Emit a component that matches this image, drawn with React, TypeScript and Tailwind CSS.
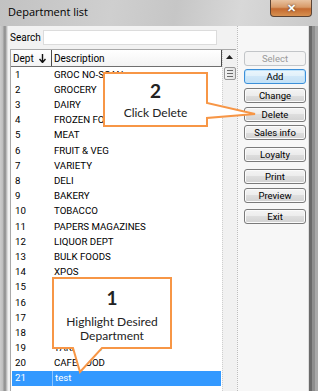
import React from "react";

const rows: [string, string][] = [
  ["1", "GROC NO-SCAN"],
  ["2", "GROCERY"],
  ["3", "DAIRY"],
  ["4", "FROZEN FOODS"],
  ["5", "MEAT"],
  ["6", "FRUIT & VEG"],
  ["7", "VARIETY"],
  ["8", "DELI"],
  ["9", "BAKERY"],
  ["10", "TOBACCO"],
  ["11", "PAPERS MAGAZINES"],
  ["12", "LIQUOR DEPT"],
  ["13", "BULK FOODS"],
  ["14", "XPOS"],
  ["15", ""],
  ["16", ""],
  ["17", ""],
  ["18", ""],
  ["19", "TAKEAWAY"],
  ["20", "CAFE FOOD"],
  ["21", "test"],
];

function Btn({ label, mt, kind }: { label: string; mt: string; kind?: "disabled" | "default" }) {
  const base =
    "w-[62px] h-[15px] rounded-[3px] border flex items-center justify-center text-[9.5px] leading-none";
  let cls = "";
  if (kind === "disabled") {
    cls = "border-[#c2c5c8] bg-[#f4f4f4] text-[#9a9a9a]";
  } else if (kind === "default") {
    cls =
      "border-[#3c8fd8] bg-[linear-gradient(#eaf6fd_0%,#e0f0fa_50%,#cfe7f8_50%,#c4e0f5_100%)] text-black shadow-[inset_0_0_0_1px_#bfe3fb]";
  } else {
    cls =
      "border-[#7a7a7a] bg-[linear-gradient(#f4f4f4_0%,#ececec_50%,#dedede_50%,#d2d2d2_100%)] text-black shadow-[inset_0_0_0_1px_#fbfbfb]";
  }
  return <div className={`${base} ${cls} ${mt}`}>{label}</div>;
}

export default function App() {
  return (
    <div className="relative w-[318px] h-[391px] overflow-hidden bg-[#c4c4c4] flex flex-col font-['Roboto',sans-serif]">
      {/* Title bar */}
      <div className="h-[26px] shrink-0 flex items-start bg-[linear-gradient(100deg,#c2c2c2_0%,#cfcfcf_35%,#c6c6c6_55%,#d8d8d8_75%,#c9c9c9_100%)]">
        <div className="pl-[8px] pt-[5px] text-[11px] leading-[14px] text-black font-['Open_Sans',sans-serif]">
          Department list
        </div>
        <div className="ml-auto mr-[6px] w-[42px] h-[17px] rounded-b-[4px] border border-t-0 border-[#5b4334] bg-[linear-gradient(#e8c2a0_0%,#d89a68_45%,#c46a30_55%,#d69050_100%)] flex items-center justify-center">
          <span className="text-white text-[11px] font-bold leading-none [text-shadow:0_0_2px_#3a2a20]">✕</span>
        </div>
      </div>

      {/* Body */}
      <div className="flex-1 flex min-h-0">
        <div className="w-[8px] shrink-0 bg-[linear-gradient(to_right,#cdcdcd_0px,#bdbdbd_3px,#929292_4px,#9c9c9c_6px,#dcdcdc_7px)]" />

        {/* Client */}
        <div className="w-[300px] shrink-0 bg-[#f2f2f2] flex">
          {/* Left column */}
          <div className="w-[229px] shrink-0 pl-[2px] flex flex-col">
            <div className="mt-[4px] h-[15px] flex items-center">
              <div className="w-[33px] text-[10px] leading-none text-black">Search</div>
              <div className="w-[174px] h-[15px] bg-white border border-[#dcdcdc]" />
            </div>

            {/* List */}
            <div className="mt-[4px] w-[226px] flex-1 border-t border-l border-[#a9a9a9] bg-white flex">
              <div className="w-[211px] shrink-0 flex flex-col">
                {/* Header */}
                <div className="h-[17px] shrink-0 flex border-b border-[#6f6f6f] bg-[linear-gradient(#ffffff,#f3f3f3)] text-[10px] text-black">
                  <div className="w-[41px] shrink-0 border-r border-[#4a4a4a] flex items-center pl-[2px] gap-[5px]">
                    <span>Dept</span>
                    <svg width="7" height="9" viewBox="0 0 7 9">
                      <path d="M3.5 0 V8 M0.5 5 L3.5 8.5 L6.5 5" stroke="#111" strokeWidth="1.4" fill="none" />
                    </svg>
                  </div>
                  <div className="flex-1 flex items-center pl-[2px] border-r border-[#4a4a4a]">Description</div>
                </div>
                {/* Rows */}
                <div className="flex flex-col text-[9.7px] leading-none">
                  {rows.map(([d, n]) => {
                    const sel = d === "21";
                    return (
                      <div
                        key={d}
                        className={`h-[15.2px] shrink-0 flex items-center ${
                          sel ? "bg-[#3399ff] text-white ml-[1px] mr-[1px]" : "text-black"
                        }`}
                      >
                        <div
                          className={`w-[41px] shrink-0 h-full flex items-center ${
                            sel ? "pl-[3px] border-r border-[#8cc4ff]" : "pl-[4px]"
                          }`}
                        >
                          {d}
                        </div>
                        <div className="pl-[2px] whitespace-nowrap">{n}</div>
                      </div>
                    );
                  })}
                </div>
              </div>

              {/* Scrollbar */}
              <div className="w-[14px] shrink-0 bg-[#f1f1f1] border-l border-dotted border-[#cfcfcf] flex flex-col items-center">
                <div className="h-[14px] w-full flex items-center justify-center">
                  <svg width="7" height="4" viewBox="0 0 7 4">
                    <path d="M0 4 L3.5 0 L7 4 Z" fill="#222" />
                  </svg>
                </div>
                <div className="mt-[3px] w-[12px] h-[13px] rounded-[2px] border border-[#979797] bg-[linear-gradient(to_right,#f3f3f3,#e2e2e2)] flex flex-col items-center justify-center gap-[2px]">
                  <div className="w-[6px] h-[1px] bg-[#6a6a6a]" />
                  <div className="w-[6px] h-[1px] bg-[#6a6a6a]" />
                  <div className="w-[6px] h-[1px] bg-[#6a6a6a]" />
                </div>
              </div>
            </div>
          </div>

          {/* Button panel */}
          <div className="flex-1 bg-[#f7f7f7] border-l border-dotted border-[#bdbdbd] pl-[6px] flex flex-col font-['Roboto',sans-serif]">
            <Btn label="Select" mt="mt-[25px]" kind="disabled" />
            <Btn label="Add" mt="mt-[3px]" kind="default" />
            <Btn label="Change" mt="mt-[4px]" />
            <Btn label="Delete" mt="mt-[4px]" />
            <Btn label="Sales info" mt="mt-[3px]" />
            <Btn label="Loyalty" mt="mt-[7px]" />
            <Btn label="Print" mt="mt-[7px]" />
            <Btn label="Preview" mt="mt-[4px]" />
            <Btn label="Exit" mt="mt-[6px]" />
          </div>
        </div>

        <div className="w-[10px] shrink-0 bg-[linear-gradient(to_right,#dedede_0px,#dedede_1px,#6a6a6a_1px,#6a6a6a_4px,#8e8e8e_4px,#8e8e8e_7px,#a9a9a9_7px)]" />
      </div>

      {/* Callouts */}
      <svg className="absolute left-0 top-0 pointer-events-none" width="318" height="391" viewBox="0 0 318 391">
        <path
          d="M104 73 H207 V103 L255 114 L207 118 V126 H104 Z"
          fill="#ffffff"
          stroke="#f79646"
          strokeWidth="2"
          strokeLinejoin="miter"
        />
        <path
          d="M53 278 H171 V348 H102 L80 372 L73 348 H53 Z"
          fill="#ffffff"
          stroke="#f79646"
          strokeWidth="2"
          strokeLinejoin="miter"
        />
      </svg>
      <div className="absolute left-[104px] top-[80px] w-[103px] flex flex-col items-center font-['Lato',sans-serif] text-[#222] pointer-events-none">
        <div className="text-[19px] font-bold leading-[22px]">2</div>
        <div className="text-[12px] leading-[14px] mt-[4px]">Click Delete</div>
      </div>
      <div className="absolute left-[53px] top-[287px] w-[118px] flex flex-col items-center font-['Lato',sans-serif] text-[#222] pointer-events-none">
        <div className="text-[19px] font-bold leading-[22px]">1</div>
        <div className="text-[12px] leading-[14px] mt-[6px]">Highlight Desired</div>
        <div className="text-[12px] leading-[14px]">Department</div>
      </div>
    </div>
  );
}
